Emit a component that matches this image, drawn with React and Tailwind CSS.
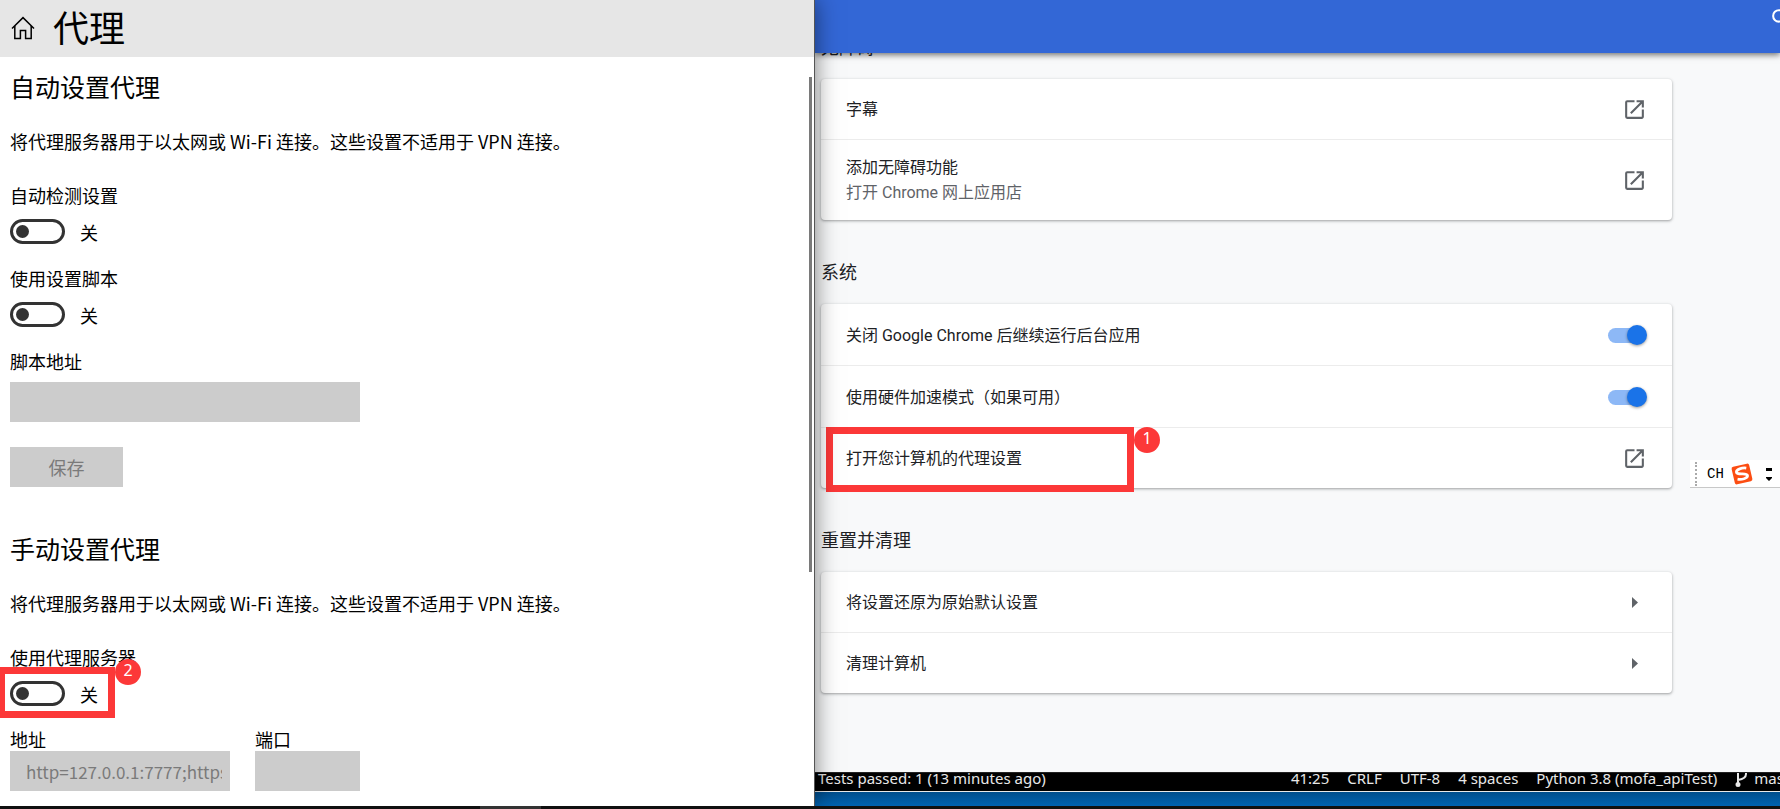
import React, { useId } from 'react';

const HomeIcon = () => (
  <svg className="h-6 w-6" viewBox="0 0 24 24" fill="none" stroke="#000" strokeWidth="1.5" aria-hidden="true">
    <path d="M1 12.5 12 1.6l11 10.9" />
    <path d="M3.8 10v12.4h5.6v-8h5.2v8h5.6V10" />
  </svg>
);

const LaunchIcon = () => (
  <svg className="h-[25px] w-[25px]" viewBox="0 0 24 24" fill="#5f6368" aria-hidden="true">
    <path d="M19 19H5V5h7V3H5a2 2 0 0 0-2 2v14a2 2 0 0 0 2 2h14c1.1 0 2-.9 2-2v-7h-2v7zM14 3v2h3.59l-9.83 9.83 1.41 1.41L19 6.41V10h2V3h-7z" />
  </svg>
);

const ArrowIcon = () => (
  <svg className="h-[25px] w-[25px]" viewBox="0 0 25 25" fill="#5f6368" aria-hidden="true">
    <path d="M10 7v11l6-5.5z" />
  </svg>
);

const SearchIcon = () => (
  <svg className="h-[25px] w-[25px]" viewBox="0 0 24 24" fill="#fff" aria-hidden="true">
    <path d="M15.5 14h-.79l-.28-.27A6.471 6.471 0 0 0 16 9.5 6.5 6.5 0 1 0 9.5 16c1.61 0 3.09-.59 4.23-1.57l.27.28v.79l5 4.99L20.49 19l-4.99-5zm-6 0C7.01 14 5 11.99 5 9.5S7.01 5 9.5 5 14 7.01 14 9.5 11.99 14 9.5 14z" />
  </svg>
);

const BranchIcon = () => (
  <svg className="h-[18px] w-[13px]" viewBox="0 0 13 18" fill="none" stroke="#e8e8e8" strokeWidth="2" aria-hidden="true">
    <path d="M3 1v14M11 1v4c0 3-2 5-8 6" />
    <circle cx="3" cy="15.5" r="1.5" fill="#e8e8e8" />
  </svg>
);

const SogouIcon = () => (
  <svg className="h-[22px] w-[22px]" viewBox="0 0 22 22" aria-hidden="true">
    <g transform="rotate(-13 11 11)">
      <rect x="2" y="2" width="18" height="18" rx="2" fill="#fc4d12" />
      <path
        d="M16.5 6.2C13 4.8 6 4.9 6 8.2c0 3.3 10 2.2 10 5.4 0 3.2-7 3-10.5 1.4"
        fill="none"
        stroke="#fff"
        strokeWidth="2.8"
      />
    </g>
  </svg>
);

const Badge = ({ children, className }) => (
  <span
    className={`absolute z-20 flex h-[26px] w-[26px] items-center justify-center rounded-full bg-[#fc3838] pb-1 font-['Noto_Sans'] text-base leading-none text-white ${className}`}
  >
    {children}
  </span>
);

const OffSwitch = ({ label, marked }) => {
  const id = useId();
  return (
    <div className="mb-[22px]">
      <label htmlFor={id} className="block leading-6">{label}</label>
      <div className="relative mt-3 flex h-[25px] items-center gap-[15px]">
        <input
          id={id}
          type="checkbox"
          role="switch"
          className="relative h-[25px] w-[55px] appearance-none rounded-full border-[3px] border-[#333] before:absolute before:top-[3px] before:left-[3px] before:h-[13px] before:w-[13px] before:rounded-full before:bg-[#333]"
        />
        <span>关</span>
        {marked && (
          <>
            <div className="pointer-events-none absolute -top-[14px] -left-3 h-[51px] w-[117px] border-[7px] border-[#fc3838]" />
            <Badge className="-top-[22px] left-[105px]">2</Badge>
          </>
        )}
      </div>
    </div>
  );
};

const Field = ({ label, value, className, labelClass }) => {
  const id = useId();
  return (
    <div className={className}>
      <label htmlFor={id} className={`block ${labelClass}`}>{label}</label>
      <input
        id={id}
        disabled
        defaultValue={value}
        className="block h-10 w-full border-x-8 border-[#ccc] bg-[#ccc] pl-2 text-[17px] text-[#7a7a7a]"
      />
    </div>
  );
};

const DESCRIPTION = '将代理服务器用于以太网或 Wi-Fi 连接。这些设置不适用于 VPN 连接。';

const ProxyWindow = () => (
  <div className="relative z-20 border-r border-[#555] bg-white font-['Noto_Sans_CJK_SC',sans-serif] text-lg text-black shadow-[0_0_22px_rgba(0,0,0,0.5)]">
    <header className="flex h-[57px] items-center gap-[18px] bg-[#e6e6e6] pb-0.5 pl-[11px]">
      <a href="#home" aria-label="主页"><HomeIcon /></a>
      <h1 className="pb-1 text-4xl leading-none">代理</h1>
    </header>
    <div className="absolute top-[77px] right-[2px] h-[495px] w-[3px] bg-[#7a7a7a]" />

    <main className="px-[10px] pt-[14px] pb-[15px]">
      <section>
        <h2 className="text-[25px] leading-[30px]">自动设置代理</h2>
        <p className="mt-7 mb-[30px] leading-6">{DESCRIPTION}</p>
        <OffSwitch label="自动检测设置" />
        <OffSwitch label="使用设置脚本" />
        <Field label="脚本地址" className="w-[350px]" labelClass="pb-[9px] leading-6" />
        <button type="button" disabled className="mt-[25px] block h-10 w-[113px] bg-[#ccc] text-[#7a7a7a]">
          保存
        </button>
      </section>

      <section className="mt-[46px]">
        <h2 className="text-[25px] leading-[30px]">手动设置代理</h2>
        <p className="mt-7 mb-[30px] leading-6">{DESCRIPTION}</p>
        <OffSwitch label="使用代理服务器" marked />
        <div className="flex gap-[25px]">
          <Field label="地址" value="http=127.0.0.1:7777;https" className="w-[220px]" labelClass="leading-[23px]" />
          <Field label="端口" className="w-[105px]" labelClass="leading-[23px]" />
        </div>
      </section>
    </main>
  </div>
);

const Card = ({ title, children }) => (
  <section>
    <h2 className="pt-[41px] pb-[19px] text-lg leading-6">{title}</h2>
    <div className="divide-y divide-[#ececec] rounded bg-white shadow-[0_1px_2px_rgba(60,64,67,0.3),0_1px_3px_1px_rgba(60,64,67,0.15)]">
      {children}
    </div>
  </section>
);

const Row = ({ title, subtitle, icon, children }) => (
  <div className="relative">
    <button
      type="button"
      className={`flex w-full items-center justify-between px-[25px] text-left ${subtitle ? 'h-20' : 'h-[60px]'}`}
    >
      <span>
        <span className="block leading-[25px]">{title}</span>
        {subtitle && <span className="block leading-[25px] text-[#5f6368]">{subtitle}</span>}
      </span>
      {icon}
    </button>
    {children}
  </div>
);

const ToggleRow = ({ title }) => {
  const id = useId();
  return (
    <div>
      <div className="flex h-[61px] items-center justify-between px-[25px]">
        <label htmlFor={id} className="pt-0.5">{title}</label>
        <input
          id={id}
          type="checkbox"
          role="switch"
          defaultChecked
          className="relative h-5 w-[39px] appearance-none before:absolute before:top-[3px] before:left-0 before:h-[15px] before:w-[35px] before:rounded-full before:bg-[#8db8f6] after:absolute after:top-0 after:right-0 after:h-5 after:w-5 after:rounded-full after:bg-[#1a73e8] after:shadow-[0_1px_3px_rgba(0,0,0,0.4)]"
        />
      </div>
    </div>
  );
};

const ImeBar = () => (
  <div className="absolute top-[460px] right-0 flex h-[28px] w-[90px] items-center border-b border-[#c8c8c8] bg-white pl-[5px]">
    <span className="h-6 border-l-2 border-dotted border-[#aaa]" />
    <span className="ml-[10px] font-['Liberation_Mono',monospace] text-sm text-black">CH</span>
    <span className="ml-[7px]"><SogouIcon /></span>
    <svg className="ml-3 h-[14px] w-2" viewBox="0 0 8 14" aria-hidden="true">
      <path d="M1 1h6v3H1zM1 10h6v1L4 14 1 11z" />
    </svg>
  </div>
);

const ChromeSettings = () => (
  <div className="relative flex min-h-0 flex-1 flex-col overflow-hidden bg-[#f8f9fa] font-[Roboto,'Noto_Sans_CJK_SC',sans-serif] text-base text-[#202124]">
    <header className="relative z-10 h-[53px] bg-[#3367d6] shadow-[0_2px_6px_rgba(0,0,0,0.55)]">
      <button type="button" aria-label="搜索" className="absolute top-[6px] -right-[14px]">
        <SearchIcon />
      </button>
    </header>
    <main className="-mt-[58px] mr-[108px] ml-1.5">
      <Card title="无障碍">
        <Row title="字幕" icon={<LaunchIcon />} />
        <Row title="添加无障碍功能" subtitle="打开 Chrome 网上应用店" icon={<LaunchIcon />} />
      </Card>
      <Card title="系统">
        <ToggleRow title="关闭 Google Chrome 后继续运行后台应用" />
        <ToggleRow title="使用硬件加速模式（如果可用）" />
        <Row title="打开您计算机的代理设置" icon={<LaunchIcon />}>
          <div className="pointer-events-none absolute -top-px -bottom-1 left-[5px] w-[308px] border-[7px] border-[#fc3838]" />
          <Badge className="-top-px left-[313px]">1</Badge>
        </Row>
      </Card>
      <Card title="重置并清理">
        <Row title="将设置还原为原始默认设置" icon={<ArrowIcon />} />
        <Row title="清理计算机" icon={<ArrowIcon />} />
      </Card>
    </main>
    <ImeBar />
  </div>
);

const STATUS = ['41:25', 'CRLF', 'UTF-8', '4 spaces', 'Python 3.8 (mofa_apiTest)'];

const StatusBar = () => (
  <footer className="flex h-5 items-center overflow-hidden border-t border-b border-t-[#222] border-b-[#e8e8e8] bg-black pb-2 pl-[3px] font-['Noto_Sans',sans-serif] text-[15px] leading-5 whitespace-nowrap text-[#e8e8e8]">
    <span>Tests passed: 1 (13 minutes ago)</span>
    <div className="-mr-6 ml-auto flex items-center gap-[18px]">
      {STATUS.map((item) => (
        <span key={item}>{item}</span>
      ))}
      <span className="flex items-center gap-[6px]">
        <BranchIcon />
        master
      </span>
    </div>
  </footer>
);

export default function App() {
  return (
    <div className="flex min-h-screen flex-col overflow-hidden bg-[#101010]">
      <div className="grid flex-1 grid-cols-[815fr_965fr]">
        <ProxyWindow />
        <div className="flex min-w-0 flex-col">
          <ChromeSettings />
          <StatusBar />
          <div className="h-[14px] bg-linear-to-b from-[#004e8c] to-[#0063b1]" />
        </div>
      </div>
      <div className="relative z-30 h-[3px] bg-[#101010] pl-[480px]">
        <div className="h-full w-[61px] bg-[#333]" />
      </div>
    </div>
  );
}
